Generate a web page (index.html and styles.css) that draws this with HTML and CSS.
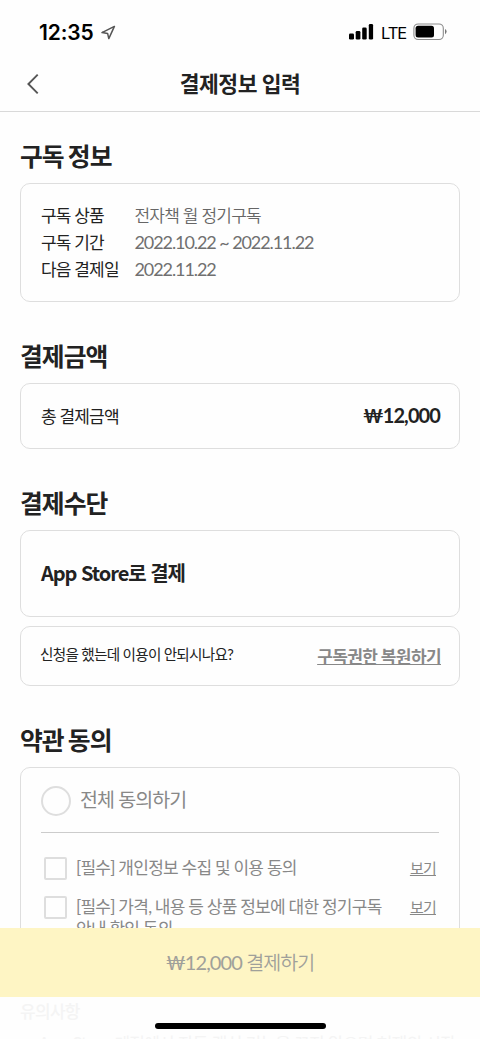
FILE: index.html
```html
<!DOCTYPE html>
<html lang="ko">
<head>
<meta charset="utf-8">
<title>결제정보 입력</title>
<link rel="stylesheet" href="styles.css">
</head>
<body>
<div class="screen">
  <div class="status">
    <div class="status-left"><span class="time">12:35</span>
      <svg class="loc" width="15" height="15" viewBox="0 0 15 15"><path d="M13.4 1.4 L1 7.6 L6.6 8.4 L7.8 13.6 Z" fill="none" stroke="#555" stroke-width="1.5" stroke-linejoin="round"/></svg>
    </div>
    <div class="status-right">
      <svg width="25" height="16" viewBox="0 0 25 16"><rect x="0" y="9.5" width="5" height="6" rx="1.3"/><rect x="6.7" y="7" width="4.7" height="8.5" rx="1.3"/><rect x="13.2" y="3.5" width="4.5" height="12" rx="1.3"/><rect x="19.8" y="0" width="4.3" height="15.5" rx="1.3"/></svg>
      <span class="lte">LTE</span>
      <svg class="battery" width="35" height="18" viewBox="0 0 35 18"><rect x=".9" y="1" width="29.4" height="15.5" rx="4.3" fill="none" stroke="#8b8b8b" stroke-width="1.1"/><rect x="2.6" y="2.8" width="18.4" height="11.8" rx="2.5"/><path d="M32 6v5.2q1.6-.8 1.6-2.6T32 6z" fill="#777"/></svg>
    </div>
  </div>
  <header class="nav">
    <svg class="back" width="12" height="20" viewBox="0 0 12 20"><path d="M10.7 .7 L1.4 10 L10.7 19.3" fill="none" stroke="#555" stroke-width="1.9"/></svg>
    <h1>결제정보 입력</h1>
  </header>
  <main>
    <section>
      <h2>구독 정보</h2>
      <div class="card info">
        <div class="row"><span class="key">구독 상품</span><span class="val">전자책 월 정기구독</span></div>
        <div class="row"><span class="key">구독 기간</span><span class="val num">2022.10.22 ~ 2022.11.22</span></div>
        <div class="row"><span class="key">다음 결제일</span><span class="val num">2022.11.22</span></div>
      </div>
    </section>
    <section>
      <h2>결제금액</h2>
      <div class="card amount"><span class="total">총 결제금액</span><strong><span class="won">₩</span>12,000</strong></div>
    </section>
    <section>
      <h2>결제수단</h2>
      <div class="card method"><span>App Store로 결제</span></div>
      <div class="card restore"><span class="question">신청을 했는데 이용이 안되시나요?</span><a class="restore-link">구독권한 복원하기</a></div>
    </section>
    <section>
      <h2>약관 동의</h2>
      <div class="card terms">
        <div class="all"><i class="circle"></i><span>전체 동의하기</span></div>
        <div class="term"><i class="box"></i><span class="label">[필수] 개인정보 수집 및 이용 동의</span><a>보기</a></div>
        <div class="term"><i class="box"></i><span class="label">[필수] 가격, 내용 등 상품 정보에 대한 정기구독<br>안내 확인 동의</span><a>보기</a></div>
      </div>
    </section>
  </main>
  <footer class="bottom">
    <div class="pay"><span><span class="won">₩</span>12,000 <span class="pay-label">결제하기</span></span></div>
    <div class="notice"><p class="notice-title">유의사항</p><p class="notice-item">· App Store 계정에서 자동 갱신 기능을 끄지 않으면 현재의 시작</p></div>
    <div class="home"></div>
  </footer>
</div>
</body>
</html>
```
FILE: styles.css
```css
* { box-sizing: border-box; }
body { margin: 0; background: #fff; font-family: Lato, "Noto Sans CJK KR", sans-serif; color: #222; }
h1, h2, p { margin: 0; }
.screen { position: relative; width: 480px; height: 1039px; overflow: hidden; background: #fefefe; }
.status { height: 56px; display: flex; justify-content: space-between; padding: 21px 32px 0 39px; color: #000; }
.status-left, .status-right { display: flex; height: 22px; align-items: center; }
.time { font: 600 21px/22px Inter, sans-serif; width: 62px; white-space: nowrap; letter-spacing: -.1px; padding-top: 1px; }
.lte { font: 400 16.5px/22px Inter, sans-serif; margin: 0 7px 0 7px; letter-spacing: -1.1px; padding-top: 1px; }
.nav { height: 56px; display: flex; align-items: center; justify-content: center; border-bottom: 1px solid #d9d9d9; position: relative; }
.back { position: absolute; left: 27px; top: 18px; }
h1 { font-size: 21.5px; line-height: 28px; font-weight: 700; letter-spacing: -.5px; }
main { padding: 31px 20px 0; }
section { margin-bottom: 41px; }
h2 { font-size: 24.8px; line-height: 28px; font-weight: 700; letter-spacing: -1px; word-spacing: -.8px; margin-bottom: 12px; }
.card { border: 1px solid #dedede; border-radius: 10px; }
.info { height: 119px; padding: 18px 20px; }
.row { display: flex; height: 27px; line-height: 27px; font-size: 17px; letter-spacing: -.8px; white-space: nowrap; }
.key { width: 93.5px; }
.val { color: #666; font-weight: 350; }
.num { font-size: 18px; font-weight: 400; letter-spacing: -1.08px; color: #707070; }
.amount { height: 66px; display: flex; justify-content: space-between; align-items: center; padding: 0 19px 2px 20px; }
.total { font-size: 17px; letter-spacing: -.8px; }
strong { font-size: 20px; font-weight: 700; letter-spacing: -.9px; }
.won { font-size: .95em; }
.method { height: 87px; padding: 0 20px 2px; display: flex; align-items: center; font: 700 20px/28px "Noto Sans CJK KR", sans-serif; letter-spacing: -1.05px; }
.restore { height: 60px; margin-top: 9px; padding: 0 18px 2px 19px; display: flex; align-items: center; justify-content: space-between; white-space: nowrap; }
.question { font-size: 14.6px; letter-spacing: -.7px; padding-bottom: 3px; }
.restore-link { font-size: 17px; font-weight: 700; color: #888; text-decoration: underline; letter-spacing: -.6px; }
.terms { height: 300px; padding: 18px 20px; color: #888; }
.all { display: flex; height: 47px; gap: 9px; font-size: 19.5px; line-height: 28px; letter-spacing: -.9px; border-bottom: 1px solid #ccc; margin-bottom: 24px; }
.circle { width: 30px; height: 30px; border: 2.5px solid #dedede; border-radius: 50%; }
.term { display: flex; font-size: 17px; line-height: 22px; letter-spacing: -.74px; padding-left: 3px; margin-bottom: 16px; }
.box { width: 23px; height: 23px; border: 2px solid #dedede; border-radius: 2px; margin-right: 9px; }
.label { flex: 1; white-space: nowrap; }
.term a { font-size: 15px; text-decoration: underline; padding-right: 3px; line-height: 23px; }
.bottom { position: absolute; left: 0; top: 928px; width: 480px; height: 111px; background: #fefefe; overflow: hidden; }
.pay { height: 69px; padding-bottom: 3px; background: #fef5c4; display: flex; align-items: center; justify-content: center; color: #a0a09a; font-size: 20px; letter-spacing: -.9px; }
.pay-label { font-size: 19.5px; font-weight: 350; }
.notice { padding: 3px 20px; color: #f4f4f4; white-space: nowrap; letter-spacing: -.7px; }
.notice-title { font-size: 17px; line-height: 24px; font-weight: 500; }
.notice-item { font: 17px/24px "Noto Sans CJK KR", sans-serif; margin-top: 7px; padding-left: 11px; letter-spacing: -.75px; }
.home { position: absolute; left: 155px; top: 95px; width: 171px; height: 6px; border-radius: 3px; background: #000; }
```
